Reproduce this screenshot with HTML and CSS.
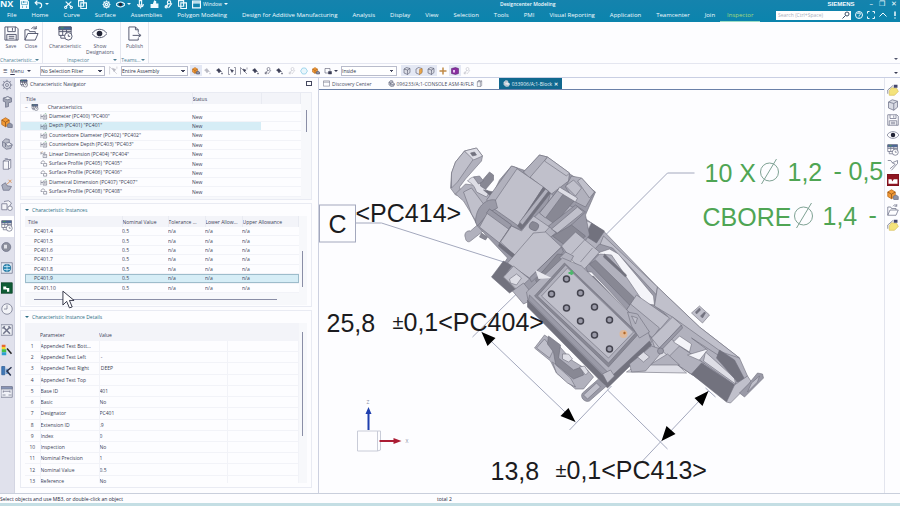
FILE: index.html
```html
<!DOCTYPE html>
<html lang="en">
<head>
    <meta charset="UTF-8">
    <meta name="viewport" content="width=device-width, initial-scale=1.0">
    <title>Designcenter Modeling</title>
    <link rel="stylesheet" href="styles.css">
</head>
<body>
    <!-- icon sprite -->
    <svg class="sprite" aria-hidden="true">
        <symbol id="i-save" viewBox="0 0 16 16"><path d="M1 1h12l2 2v12H1zM4 1v5h8V1M3 15V9h10v6M9 2v3M5 11h6M5 13h6"/></symbol>
        <symbol id="i-folder" viewBox="0 0 16 16"><path d="M1 15V4h4l1 2h6v2M1 15l3-7h11l-3 7zM8 3c2-3 4-2 5 0M13 3V0M13 3h-3"/></symbol>
        <symbol id="i-insp" viewBox="0 0 16 16"><path fill="#fff" d="M1 1h13v9H1z"/><path fill="#42659a" d="M1 1h13v3H1z"/><path d="M1 6h13M5 4v6M9 4v6M3 10v3h5"/><circle cx="11" cy="11" r="4" fill="#fff"/><path d="M11 9v2h2"/><path stroke="#4ba04b" d="M3 2h3"/></symbol>
        <symbol id="i-eye" viewBox="0 0 16 16"><path d="M0 8c4-6 12-6 16 0c-4 6-12 6-16 0z"/><circle cx="8" cy="8" r="3" fill="#222436" stroke="none"/></symbol>
        <symbol id="i-publish" viewBox="0 0 16 16"><path d="M12 7V4L9 1H2v14h10v-2M9 1v3h3M6 10h8M12 8l3 2l-3 2"/></symbol>
        <symbol id="i-undo" viewBox="0 0 16 16"><path d="M6 1L2 5l4 4M2 5h7c6 0 6 8 1 9"/></symbol>
        <symbol id="i-cut" viewBox="0 0 16 16"><path d="M3 3l10 9M13 3L3 12"/><circle cx="3" cy="13" r="2"/><circle cx="13" cy="13" r="2"/></symbol>
        <symbol id="i-copy" viewBox="0 0 16 16"><path d="M1 1h9v10H1zM5 5h10v10H5z"/></symbol>
        <symbol id="i-gear" viewBox="0 0 16 16"><circle cx="8" cy="8" r="5"/><circle cx="8" cy="8" r="2"/><path d="M8 1v2M8 13v2M1 8h2M13 8h2M3 3l2 2M11 11l2 2M13 3l-2 2M5 11l-2 2"/></symbol>
        <symbol id="i-mic" viewBox="0 0 16 16"><path d="M6 1h4v8H6zM3 7c0 7 10 7 10 0M8 12v3"/></symbol>
        <symbol id="i-hand" viewBox="0 0 16 16"><path fill="currentColor" d="M2 8h4l2-6l2 1v4h4v6H2z"/></symbol>
        <symbol id="i-window" viewBox="0 0 16 16"><path d="M1 2h14v12H1zM1 5h14"/></symbol>
        <symbol id="i-part" viewBox="0 0 16 16"><path fill="#b9bcc8" d="M2 5l4-4l5 1v4l4 3l-2 5l-6 1l-5-4z"/><path fill="#e8e9ef" d="M6 7l5-1l4 3l-6 2z"/><path d="M6 7v5M2 5l4 2"/></symbol>
        <symbol id="i-bracket" viewBox="0 0 16 16"><path fill="#9fa3b2" d="M3 3l6-2l5 2v5l-4 1v5l-4 1V8L3 7z"/><path fill="#eceef4" d="M3 3l6-2l5 2l-5 2z"/></symbol>
        <symbol id="i-asm" viewBox="0 0 16 16"><path fill="#f39a35" stroke="#b56618" d="M1 4l5-3l5 3v6l-5 3l-5-3z"/><path stroke="#8a4d15" d="M1 4l5 3l5-3M6 7v6"/><path fill="#8e93a6" d="M8 10l4-2l3 2v4h-6z"/></symbol>
        <symbol id="i-box" viewBox="0 0 16 16"><path fill="#f5f6fa" d="M3 4l4-2h6v11l-3 2H3z"/><path d="M3 4h7v11M10 4l3-2M5 1h4"/></symbol>
        <symbol id="i-edit" viewBox="0 0 16 16"><path fill="#a9adbd" d="M1 8l5-3l2 4l6 1l-3 5H3z"/><path stroke="#d9803a" d="M8 7l6-6M10 1l4 4"/></symbol>
        <symbol id="i-shapes" viewBox="0 0 16 16"><path fill="#f4f4f8" d="M1 5h7v8H1zM4 2l6-1l4 3l-3 5"/><circle cx="12" cy="11" r="3" fill="#fff"/></symbol>
        <symbol id="i-ball" viewBox="0 0 16 16"><circle cx="7" cy="8" r="6" fill="#8c8f9c"/><path fill="#e0e1e8" stroke="none" d="M4 5h4v5H4z"/></symbol>
        <symbol id="i-globe" viewBox="0 0 16 16"><path fill="#e6edf6" d="M0 1h15v14H0z"/><circle cx="8" cy="8" r="5" fill="#2c8bb6" stroke="#226b96"/><path stroke="#cfeaf5" d="M4 6h8M4 10h8M8 3v10"/></symbol>
        <symbol id="i-green" viewBox="0 0 16 16"><path fill="#0f5c35" stroke="#0b4226" d="M0 1h15v14H0z"/><path fill="#fff" stroke="none" d="M3 6h4v2h4v5H8v-3H3z"/></symbol>
        <symbol id="i-clock" viewBox="0 0 16 16"><circle cx="8" cy="8" r="7" fill="#f2f3f7"/><path d="M8 3v5H4"/></symbol>
        <symbol id="i-tools" viewBox="0 0 16 16"><path fill="#eef0f5" d="M0 1h15v14H0z"/><path stroke-width="2" d="M3 4l9 9M12 4l-9 9M2 6l3-3M10 3l3 3"/></symbol>
        <symbol id="i-rainbow" viewBox="0 0 16 16"><g stroke="none"><path fill="#e8662f" d="M1 1h5v3H1z"/><path fill="#f0d929" d="M1 4h5v3H1z"/><path fill="#46c04a" d="M1 7h6v4H1z"/><path fill="#2f9fd0" d="M1 11h6v4H1z"/></g><path stroke="#222" stroke-width="2" d="M8 6l6 7"/></symbol>
        <symbol id="i-cursor" viewBox="0 0 16 16"><path fill="#3f78b8" stroke="#2f5f96" d="M1 2h4v11H1z"/><path fill="#78a4d4" stroke="none" d="M6 5h4v7H6z"/><path stroke="#28324c" stroke-width="2" d="M14 3L8 8l5 6"/></symbol>
        <symbol id="i-measure" viewBox="0 0 16 16"><path fill="#f1f2f8" d="M0 1h15v14H0z"/><path fill="#8d9cc0" d="M0 1h15v3H0z"/><path d="M3 7h9M2 12h4M10 12h4M3 6v3M12 6v3"/></symbol>
        <symbol id="i-dim" viewBox="0 0 16 16"><path d="M1 3v11M1 8h5M6 5h8v9H6zM8 8h4M8 11h4"/><path stroke="#3c9a54" d="M9 3l2-2l3 2"/></symbol>
        <symbol id="i-linear" viewBox="0 0 16 16"><path d="M1 2v6M1 5h9M10 2v4M6 8h8v7H6zM8 11h4"/><path stroke="#d0893c" d="M2 3l3-2"/></symbol>
        <symbol id="i-profile" viewBox="0 0 16 16"><path d="M1 8c0-7 8-8 9-2M1 8h4M7 8h7v6H7z"/></symbol>
        <symbol id="i-ptr" viewBox="0 0 16 16"><path fill="currentColor" d="M1 6l5-3l2 3l3 3h-3l-2 3l-2-3z"/><path d="M10 13h4M12 11v4"/></symbol>
        <symbol id="i-snap" viewBox="0 0 16 16"><path d="M4 1H1v14h3M12 1h3v14h-3"/><path fill="currentColor" d="M5 5l6 2l-3 4z"/></symbol>
        <symbol id="i-corner" viewBox="0 0 16 16"><path d="M1 15V1M1 1l13 13M14 1v4"/><path fill="currentColor" d="M6 4l6 2l-3 4z"/></symbol>
        <symbol id="i-link" viewBox="0 0 16 16"><path d="M2 14l6-8M8 14l6-8"/><circle cx="9" cy="4" r="3"/><circle cx="4" cy="12" r="2"/></symbol>
        <symbol id="i-hex" viewBox="0 0 16 16"><path stroke="#55b5dd" fill="#e9f6fc" d="M5 2h6l4 6l-4 6H5L1 8z"/></symbol>
        <symbol id="i-rect" viewBox="0 0 16 16"><path d="M2 3h10v9H2z"/><path fill="currentColor" d="M9 9h6v5H9z"/></symbol>
        <symbol id="i-cube" viewBox="0 0 16 16"><path fill="#d9dbe4" d="M2 4l5-3l7 2v8l-5 4l-7-3z"/><path d="M2 4l7 2l5-3M9 6v9"/></symbol>
        <symbol id="i-cubeo" viewBox="0 0 16 16"><path fill="#e5e6ee" d="M2 4l5-3l7 2v8l-5 4l-7-3z"/><path fill="#eaa74a" stroke="#b97a28" d="M9 5l5-2v8l-5 4z"/></symbol>
        <symbol id="i-purple" viewBox="0 0 16 16"><path fill="#8a2fa0" stroke="#4b1760" d="M1 3l8-2l6 2v10l-6 2l-8-2z"/><path fill="#e7c6ef" stroke="none" d="M4 6h4v5H4z"/></symbol>
        <symbol id="i-plus" viewBox="0 0 16 16"><path stroke="#c08a48" stroke-width="3" d="M8 1v14M1 8h14"/></symbol>
        <symbol id="i-note" viewBox="0 0 16 16"><path fill="#f4e37c" stroke="#d9c262" d="M3 9l3-4l7 1l2 4l-5 5H3z"/><path fill="#43466e" stroke="none" d="M9 1h5v4H9z"/><path d="M1 13V8l7-6"/></symbol>
        <symbol id="i-pipe" viewBox="0 0 16 16"><path d="M1 2h4l2 3l7-3M14 2v4l-8 9M7 5l4 2l-7 6"/></symbol>
        <symbol id="i-red" viewBox="0 0 16 16"><path fill="#8f1622" stroke="#6a0e18" d="M0 0h16v16H0z"/><path fill="#fff" stroke="none" d="M2 7h4l1 3l2-3h5v6H2z"/></symbol>
    </svg>

    <header class="app-header">
        <div class="title-row">
            <strong class="nx">NX</strong>
            <div class="quick">
                <button aria-label="Save"><svg><use href="#i-save"/></svg></button>
                <button aria-label="Undo"><svg><use href="#i-undo"/></svg><i class="caret"></i></button>
                <button class="push" aria-label="Cut"><svg><use href="#i-cut"/></svg></button>
                <button aria-label="Copy"><svg><use href="#i-copy"/></svg></button>
                <button class="push" aria-label="Settings"><svg><use href="#i-gear"/></svg></button>
                <button aria-label="View"><svg><use href="#i-eye"/></svg><i class="caret"></i></button>
                <button aria-label="Voice"><svg><use href="#i-mic"/></svg></button>
                <button aria-label="Touch"><svg><use href="#i-hand"/></svg></button>
                <button aria-label="Repeat"><svg><use href="#i-link"/></svg></button>
                <button aria-label="Switch"><svg><use href="#i-copy"/></svg></button>
                <button class="win"><svg><use href="#i-window"/></svg>Window<i class="caret"></i></button>
            </div>
            <span class="app-title">Designcenter Modeling</span>
            <strong class="brand">SIEMENS</strong>
            <div class="win-controls">
                <button aria-label="Minimize">&#8211;</button>
                <button aria-label="Restore">&#10064;</button>
                <button aria-label="Close">&#10005;</button>
            </div>
        </div>
        <div class="menu-row">
            <nav class="menu">
                <a href="#">File</a>
                <a href="#">Home</a>
                <a href="#">Curve</a>
                <a href="#">Surface</a>
                <a href="#">Assemblies</a>
                <a href="#">Polygon Modeling</a>
                <a href="#">Design for Additive Manufacturing</a>
                <a href="#">Analysis</a>
                <a href="#">Display</a>
                <a href="#">View</a>
                <a href="#">Selection</a>
                <a href="#">Tools</a>
                <a href="#">PMI</a>
                <a href="#">Visual Reporting</a>
                <a href="#">Application</a>
                <a href="#">Teamcenter</a>
                <a href="#">Join</a>
                <a href="#" class="active">Inspector</a>
            </nav>
            <div class="search">
                <input type="text" placeholder="Search (Ctrl+Space)" aria-label="Search">
                <svg viewBox="0 0 16 16"><circle cx="10" cy="6" r="4"/><path d="M7 9l-6 6"/></svg>
            </div>
            <div class="help">
                <button aria-label="Help"><svg viewBox="0 0 16 16"><circle cx="8" cy="8" r="7"/><path d="M5 6c0-3 6-3 6 0c0 2-3 2-3 4M8 11v2"/></svg></button>
                <button aria-label="Full screen"><svg viewBox="0 0 16 16"><path d="M1 5V1h4M11 1h4v4M15 11v4h-4M5 15H1v-4"/></svg></button>
                <button aria-label="Collapse ribbon"><svg viewBox="0 0 16 16"><path d="M1 11l7-7l7 7"/></svg></button>
                <button aria-label="Alerts"><svg viewBox="0 0 16 16"><path stroke-width="3" d="M8 1v9M8 13v2"/></svg></button>
            </div>
        </div>
    </header>

    <section class="ribbon">
        <div class="group g-char">
            <div class="tools">
                <button class="tool"><svg><use href="#i-save"/></svg>Save</button>
                <button class="tool"><svg><use href="#i-folder"/></svg>Close</button>
            </div>
            <div class="group-name"><span>Characteristic...</span><i class="caret"></i></div>
        </div>
        <div class="group g-insp">
            <div class="tools">
                <button class="tool"><svg><use href="#i-insp"/></svg>Characteristic</button>
                <button class="tool"><svg><use href="#i-eye"/></svg>Show<br>Designators</button>
            </div>
            <div class="group-name"><span>Inspector</span><i class="caret"></i></div>
        </div>
        <div class="group g-team">
            <div class="tools">
                <button class="tool"><svg><use href="#i-publish"/></svg>Publish</button>
            </div>
            <div class="group-name"><span>Teams...</span><i class="caret"></i></div>
        </div>
        <i class="caret ribbon-more"></i>
    </section>

    <section class="select-bar">
        <button class="menu-btn"><span>&#9776;</span><span><u>M</u>enu</span><i class="caret"></i></button>
        <select class="w-filter" aria-label="Selection filter"><option>No Selection Filter</option></select>
        <button class="faded" aria-label="Filter"><svg><use href="#i-corner"/></svg></button>
        <select class="w-scope" aria-label="Selection scope"><option>Entire Assembly</option></select>
        <div class="icons">
            <button class="lit" aria-label="Highlight"><svg><use href="#i-asm"/></svg></button>
            <button class="faded" aria-label="Back"><svg><use href="#i-ptr"/></svg></button>
            <button aria-label="Pick"><svg><use href="#i-ptr"/></svg></button>
            <button aria-label="Bounds"><svg><use href="#i-snap"/></svg></button>
            <button aria-label="Corner"><svg><use href="#i-corner"/></svg></button>
            <button aria-label="Face"><svg><use href="#i-ptr"/></svg></button>
            <button aria-label="Edge"><svg><use href="#i-link"/></svg></button>
            <button aria-label="Curve"><svg><use href="#i-ptr"/></svg></button>
            <button class="faded" aria-label="Chain"><svg><use href="#i-link"/></svg></button>
            <button aria-label="Polygon"><svg><use href="#i-hex"/></svg></button>
            <button aria-label="Find"><svg><use href="#i-asm"/></svg></button>
            <button aria-label="Rectangle"><svg><use href="#i-rect"/></svg></button>
        </div>
        <i class="caret"></i>
        <select class="w-inside" aria-label="Selection mode"><option>Inside</option></select>
        <div class="icons">
            <button class="lit" aria-label="Shaded"><svg><use href="#i-cube"/></svg></button>
            <button class="lit" aria-label="Section"><svg><use href="#i-cubeo"/></svg></button>
            <button class="lit" aria-label="Wireframe"><svg><use href="#i-cube"/></svg></button>
            <button aria-label="Move"><svg><use href="#i-plus"/></svg></button>
            <button class="lit" aria-label="Layer"><svg><use href="#i-purple"/></svg></button>
            <button class="faded" aria-label="Join"><svg><use href="#i-link"/></svg></button>
        </div>
        <i class="caret ribbon-more"></i>
    </section>

    <main class="workspace">
        <nav class="rail" aria-label="Resource bar">
            <button aria-label="Options"><svg><use href="#i-gear"/></svg></button>
            <button aria-label="Assembly"><svg><use href="#i-bracket"/></svg></button>
            <button aria-label="Constraints"><svg><use href="#i-asm"/></svg></button>
            <button aria-label="Part"><svg><use href="#i-part"/></svg></button>
            <button aria-label="Reuse"><svg><use href="#i-box"/></svg></button>
            <button aria-label="Edit"><svg><use href="#i-edit"/></svg></button>
            <button aria-label="Shapes"><svg><use href="#i-shapes"/></svg></button>
            <button class="current" aria-label="Inspector"><svg><use href="#i-insp"/></svg></button>
            <button aria-label="HD3D"><svg><use href="#i-ball"/></svg></button>
            <button aria-label="Web"><svg><use href="#i-globe"/></svg></button>
            <button aria-label="Manufacturing"><svg><use href="#i-green"/></svg></button>
            <button aria-label="History"><svg><use href="#i-clock"/></svg></button>
            <button aria-label="Tools"><svg><use href="#i-tools"/></svg></button>
            <button aria-label="Materials"><svg><use href="#i-rainbow"/></svg></button>
            <button aria-label="Roles"><svg><use href="#i-cursor"/></svg></button>
            <button aria-label="Measure"><svg><use href="#i-measure"/></svg></button>
        </nav>

        <aside class="navigator">
            <h2 class="nav-title"><svg><use href="#i-insp"/></svg>Characteristic Navigator<button aria-label="Maximize"></button></h2>

            <div class="card tree-card">
                <table class="tree">
                    <thead><tr><th class="c-title">Title</th><th class="c-status">Status</th><th></th></tr></thead>
                    <tbody>
                        <tr class="root"><td><i>&#8722;</i><svg><use href="#i-insp"/></svg>Characteristics</td><td></td><td></td></tr>
                        <tr><td><svg><use href="#i-dim"/></svg>Diameter (PC400) "PC400"</td><td>New</td><td></td></tr>
                        <tr class="selected"><td><svg><use href="#i-dim"/></svg>Depth (PC401) "PC401"</td><td>New</td><td></td></tr>
                        <tr><td><svg><use href="#i-dim"/></svg>Counterbore Diameter (PC402) "PC402"</td><td>New</td><td></td></tr>
                        <tr><td><svg><use href="#i-dim"/></svg>Counterbore Depth (PC403) "PC403"</td><td>New</td><td></td></tr>
                        <tr><td><svg><use href="#i-linear"/></svg>Linear Dimension (PC404) "PC404"</td><td>New</td><td></td></tr>
                        <tr><td><svg><use href="#i-profile"/></svg>Surface Profile (PC405) "PC405"</td><td>New</td><td></td></tr>
                        <tr><td><svg><use href="#i-profile"/></svg>Surface Profile (PC406) "PC406"</td><td>New</td><td></td></tr>
                        <tr><td><svg><use href="#i-dim"/></svg>Diametral Dimension (PC407) "PC407"</td><td>New</td><td></td></tr>
                        <tr><td><svg><use href="#i-profile"/></svg>Surface Profile (PC408) "PC408"</td><td>New</td><td></td></tr>
                    </tbody>
                </table>
                <span class="thumb thumb-tree"></span>
            </div>

            <section class="card instances-card">
                <h3><i class="caret"></i>Characteristic Instances</h3>
                <div class="table-wrap instances-wrap">
                    <table class="instances">
                        <thead><tr><th>Title</th><th>Nominal Value</th><th>Tolerance ...</th><th>Lower Allow...</th><th>Upper Allowance</th></tr></thead>
                        <tbody>
                            <tr><td>PC401.4</td><td>0.5</td><td>n/a</td><td>n/a</td><td>n/a</td></tr>
                            <tr><td>PC401.5</td><td>0.5</td><td>n/a</td><td>n/a</td><td>n/a</td></tr>
                            <tr><td>PC401.6</td><td>0.5</td><td>n/a</td><td>n/a</td><td>n/a</td></tr>
                            <tr><td>PC401.7</td><td>0.5</td><td>n/a</td><td>n/a</td><td>n/a</td></tr>
                            <tr><td>PC401.8</td><td>0.5</td><td>n/a</td><td>n/a</td><td>n/a</td></tr>
                            <tr class="selected"><td>PC401.9</td><td>0.5</td><td>n/a</td><td>n/a</td><td>n/a</td></tr>
                            <tr><td>PC401.10</td><td>0.5</td><td>n/a</td><td>n/a</td><td>n/a</td></tr>
                        </tbody>
                    </table>
                    <span class="thumb thumb-inst"></span>
                    <span class="thumb-x"></span>
                </div>
            </section>

            <section class="card details-card">
                <h3><i class="caret"></i>Characteristic Instance Details</h3>
                <div class="table-wrap">
                    <table class="details">
                        <thead><tr><th></th><th>Parameter</th><th>Value</th><th></th></tr></thead>
                        <tbody>
                            <tr><td>1</td><td>Appended Text Bott...</td><td></td><td></td></tr>
                            <tr><td>2</td><td>Appended Text Left</td><td>&nbsp;-</td><td></td></tr>
                            <tr><td>3</td><td>Appended Text Right</td><td>&nbsp;DEEP</td><td></td></tr>
                            <tr><td>4</td><td>Appended Text Top</td><td></td><td></td></tr>
                            <tr><td>5</td><td>Base ID</td><td>401</td><td></td></tr>
                            <tr><td>6</td><td>Basic</td><td>No</td><td></td></tr>
                            <tr><td>7</td><td>Designator</td><td>PC401</td><td></td></tr>
                            <tr><td>8</td><td>Extension ID</td><td>.9</td><td></td></tr>
                            <tr><td>9</td><td>Index</td><td>0</td><td></td></tr>
                            <tr><td>10</td><td>Inspection</td><td>No</td><td></td></tr>
                            <tr><td>11</td><td>Nominal Precision</td><td>1</td><td></td></tr>
                            <tr><td>12</td><td>Nominal Value</td><td>0.5</td><td></td></tr>
                            <tr><td>13</td><td>Reference</td><td>No</td><td></td></tr>
                        </tbody>
                    </table>
                    <span class="thumb thumb-details"></span>
                </div>
            </section>

            <svg class="pointer" viewBox="0 0 14 20"><path d="M1 1v15l4-4l3 7l3-1l-3-7h5z"/></svg>
        </aside>

        <section class="graphics">
            <div class="doc-tabs">
                <button><svg><use href="#i-window"/></svg>Discovery Center</button>
                <button class="tab-console"><svg><use href="#i-part"/></svg>096233/A;1-CONSOLE ASM-R/FLR <svg><use href="#i-box"/></svg></button>
                <button class="open"><svg><use href="#i-part"/></svg>033906/A;1-Block <b>&#10005;</b></button>
            </div>
            <svg class="canvas" viewBox="320 90 564 403" role="img" aria-label="Block model with PMI">
                <!-- leaders and extension lines -->
                <g class="leader">
                    <path d="M356 223h26L520 267M695 173h-27L600 241"/>
                    <path d="M473 337L520 291M570 430L612 386M608 390L668 449M706 388l10 9"/>
                    <path d="M482 332L576 422M709 391L643 461"/>
                </g>

                <g class="model">
                    <!-- hook and neck -->
                    <path class="m4" d="M478 186L490 172L494 175L494 180L483 193z"/>
                    <path class="m2" d="M456 162L465 151L477 148L483 156L482 161L466 179L460 187L463 196L456 195L451 188L452 173z"/>
                    <path class="m1" d="M456 162L465 151L474 159L458 182L452 188L452 173z"/>
                    <path class="m0" d="M465 151L477 148L483 156L474 160z"/>
                    <path class="m5" d="M471 153l4-1l2 3l-4 1z"/>
                    <path class="m2" d="M456 194L466 184L480 186L500 200L494 210L478 226L472 214L464 201z"/>
                    <path class="m1" d="M464 192L472 188L484 204L477 222L472 214z"/>
                    <path class="m0" d="M468 181c7-8 13-3 13 5l9 6l-3 5l-10-5c-2-6-4-8-9-11z"/>
                    <path class="m5" d="M484 190l10 2l4 5l-8-2z"/>
                    <path class="m3" d="M474 177l6-1l4 5l-5 3z"/>
                    <path class="m2" d="M466 238c-2-4 1-8 5-7l8-7l6 6l-14 11c-2 2-5 0-5-3z"/>
                    <path class="m4" d="M482 233l6 4l-2 3l-6-3z"/>

                    <!-- long arm -->
                    <path class="m2" d="M582 216L605 232L658 287L700 327L740 358L748 376L742 384L730 402L692 374L640 340L596 300L570 250z"/>
                    <path class="m1" d="M604 236L658 287L655 304L612 252L600 246z"/>
                    <path class="m3" d="M600 244L613 248L658 296L657 307L668 316L652 338L626 314L590 276L584 262z"/>
                    <path class="mw" d="M598 253L610 249L619 254L654 296L655 305L640 303z"/>
                    <path class="m2" d="M600 254L612 255L641 298L634 303L590 264z"/>
                    <path class="m4" d="M590 264L596 260L636 299L630 305z"/>
                    <path class="m5" d="M605 254L627 275L626 277L604 257z"/>
                    <path class="mw" d="M586 272L592 272L627 309L623 314z"/>
                    <path class="m4" d="M590 277L594 276L622 306L620 309z"/>
                    <path class="m5" d="M592 223L605 231L597 243L586 236z"/>
                    <path class="m0" d="M566 224L578 217L592 223L586 235L574 230z"/>
                    <path class="m1" d="M658 287L700 327L740 358L722 352L673 317L655 306z"/>
                    <path class="m1" d="M637 295L670 318L653 338L625 313z"/>
                    <path class="m2" d="M631 304L660 328L653 338L625 313z"/>
                    <path class="m1" d="M660 330L686 350L705 363L693 375L656 350L652 338z"/>
                    <path class="m2" d="M680 346L705 363L693 375L668 358z"/>
                    <path class="mw" d="M680 336L692 344L690 352L674 342zM688 355L708 349L718 356L704 362z"/>
                    <path class="m2" d="M692 338L720 356L738 380L735 385L700 360L708 350z"/>
                    <path class="m0" d="M706 352L735 378L736 384L704 361z"/>
                    <path class="m5" d="M720 350L735 360L745 379L738 382L717 358z"/>
                    <path class="m1" d="M673 317L682 325L660 348L652 338z"/>
                    <path class="m3" d="M682 325L683 328L662 350L660 348z"/>
                    <path class="m0" d="M627 372L643 362L664 352L687 373z"/>
                    <path class="m2" d="M650 365L668 354L680 365z"/>
                    <path class="m5" d="M702 363L735 385L727 402L692 374z"/>
                    <path class="m1" d="M735 385L748 376L752 382L731 403L727 402z"/>
                    <path class="m3" d="M749 384L758 373L763 374L764 378L745 397L740 393z"/>
                    <path class="m1" d="M752 383L760 376L758 382L748 392z"/>
                    <path class="m1" d="M700 306L710 315L703 323L692 313z"/>
                    <path class="m5" d="M696 312l4-4l1 2l-4 4zM701 316l4-4l1 1l-3 5z"/>

                    <!-- upper housing -->
                    <path class="m3" d="M478 226L500 180L512 166L530 172L540 155L572 175L596 192L586 215L590 235L570 262L535 300L500 270L508 258z"/>
                    <path class="m1" d="M540 155L548 157L570 173L569 181L552 194L524 172z"/>
                    <path class="m2" d="M540 155L548 157L530 178L524 172z"/>
                    <path class="m1" d="M548 157L570 173L567 176L545 161z"/>
                    <path class="m2" d="M572 176L582 178L595 192L586 207L576 202L566 187z"/>
                    <path class="m1" d="M578 181L582 178L595 192L590 198zM566 186L574 180L582 188L576 196z"/>
                    <path class="m1" d="M515 167L544 187L519 226L492 207L488 199L505 178z"/>
                    <path class="m2" d="M512 166L518 168L492 206L487 200z"/>
                    <path class="m5" d="M544 187L551 193L522 230L518 226z"/>
                    <path class="m2" d="M546 189L549 191L523 225L520 222z"/>
                    <path class="m3" d="M476 222c0-14 10-24 20-22l2 8l-8 4l-12 14z"/>
                    <path class="m1" d="M490 209L512 225L500 243L480 227z"/>
                    <path class="m3" d="M490 209L512 225L509 229L487 213z"/>
                    <path class="m2" d="M512 226L522 230L548 204L551 193L556 198L582 212L550 238L518 258L500 243z"/>
                    <path class="m1" d="M512 226L522 231L534 216L550 227L542 236L534 233L517 257L501 242z"/>
                    <path class="m5" d="M500 243L517 256L516 260L499 246z"/>
                    <path class="m4" d="M560 188L577 198L555 224L540 213z"/>
                    <path class="m2" d="M560 188L566 191L546 218L540 213z"/>
                    <path class="m0" d="M560 187L578 198L576 202L558 191z"/>
                    <path class="m3" d="M549 226L576 205L586 212L560 236z"/>
                    <path class="m1" d="M552 229L578 207L584 212L558 233z"/>
                    <rect class="m4" x="530" y="222" width="9" height="8" rx="3" transform="rotate(25 534 226)"/>
                    <path class="m1" d="M534 233L546 232L562 247L530 278L508 263z"/>
                    <path class="m3" d="M562 247L564 252L532 282L530 278z"/>
                    <path class="m5" d="M492 277L504 261L512 266L504 277L516 289L510 293z"/>
                    <path class="m1" d="M504 277L514 266L530 279L518 290z"/>
                    <path class="m0" d="M510 279l7-5l5 4l-5 7l-6-2z"/>
                    <path class="m4" d="M553 236L572 225L586 236L572 250z"/>
                    <path class="m1" d="M562 246L576 232L600 252L584 270L574 262z"/>
                    <path class="m2" d="M572 254l13-14M581 262l12-14"/>
                    <path class="m4" d="M536 280L558 254L566 255L540 288z"/>
                    <path class="m2" d="M560 258l6-6l8 4l-4 8z"/>

                    <!-- connector body -->
                    <path class="m2" d="M513 291L524 283L536 298L524 304z"/>
                    <path class="m2" d="M563 258L527 292L529 303L608 387L652 342L648 330L582 266z"/>
                    <path class="m5" d="M528 300L608 380L650 341L652 345L608 388L528 307z"/>
                    <path class="m3" d="M530 295L608 372L607 378L529 300z"/>
                    <path class="m4" d="M565 263L535 296L609 367L639 334z"/>
                    <path class="m2" d="M566 265L538 296L609 363L636 333z"/>
                    <path class="m1" d="M568 268L542 296L609 358L634 332z"/>
                    <path class="m1" d="M603 374l8-4l4 6l-7 7z"/>
                    <path class="m2" d="M628 312L638 314L650 332L640 338L632 326z"/>
                    <path class="m1" d="M632 316l6 2l-2 6z"/>
                    <path class="m2" d="M630 364L652 346L664 350L646 371L632 372z"/>
                    <path class="m0" d="M638 357l6-5l6 5l-6 5z"/>
                    <circle class="m3" cx="661" cy="351" r="3"/>

                    <!-- clip and locating pin -->
                    <path class="m2" d="M545 335L535 348L551 361L557 373L576 389L584 389L594 377L588 370L572 360L558 344z"/>
                    <path class="m1" d="M545 339L537 348L550 358L554 350z"/>
                    <path class="m4" d="M549 336l12 9l-2 13l15 12l8-3l2 8l-10 4l-18-15l-2-12l-6-8z"/>
                    <path class="m0" d="M563 354l6 0l4 5l-4 3l-6-3zM580 367l5-1l4 6l-3 3z"/>
                    <path class="m1" d="M553 362l18 16l5 9l-8-4l-11-10z"/>
                    <path class="m3" d="M599 379L607 386L590 401C585 403 580 397 583 393z"/>
                    <path class="m1" d="M597 383L601 387L588 399L584 395z"/>
                </g>

                <!-- ten counterbored holes -->
                <g class="holes">
                    <circle cx="567" cy="279" r="3"/><circle cx="552" cy="294" r="3"/>
                    <circle cx="581" cy="293" r="3"/><circle cx="567" cy="308" r="3"/>
                    <circle cx="595" cy="307" r="3"/><circle cx="581" cy="321" r="3"/>
                    <circle cx="610" cy="320" r="3"/><circle cx="595" cy="335" r="3"/>
                    <circle cx="610" cy="349" r="3"/>
                </g>
                <circle class="hot" cx="624" cy="334" r="4"/>
                <circle class="hot-core" cx="625" cy="333" r="1"/>
                <path class="origin" d="M569 273h5M572 270v5"/>
                <path class="white-arrow" d="M536 270l16 8l-13 1z"/>

                <g class="arrows">
                    <path d="M482 332l14 6l-8 8zM576 422l-15-6l8-8zM709 391l-6 15l-8-8zM662 441l5-15l9 8z"/>
                </g>

                <rect class="datum" x="320" y="205" width="36" height="37"/>
                <g class="pmi">
                    <text x="329" y="233">C</text>
                    <text x="356" y="222">&lt;PC414&gt;</text>
                    <text x="327" y="332">25,8</text>
                    <text class="pm" x="393" y="329">±</text>
                    <text x="404" y="331">0,1&lt;PC404&gt;</text>
                    <text x="491" y="480">13,8</text>
                    <text class="pm" x="556" y="477">±</text>
                    <text x="567" y="479">0,1&lt;PC413&gt;</text>
                </g>
                <g class="pmi green">
                    <text x="705" y="182">10 X</text>
                    <text x="788" y="181">1,2</text>
                    <text x="834" y="180">-</text>
                    <text x="849" y="180">0,5</text>
                    <text x="703" y="226">CBORE</text>
                    <text x="823" y="225">1,4</text>
                    <text x="869" y="224">-</text>
                </g>
                <g class="dia">
                    <circle cx="770" cy="172" r="9"/><path d="M762 184L777 159"/>
                    <circle cx="804" cy="216" r="9"/><path d="M797 228L812 203"/>
                </g>

                <!-- view triad -->
                <g class="triad">
                    <path class="cube" d="M358 431h20v20h-20zM378 431h3v19l-3 1"/>
                    <path class="z-axis" d="M368 430V414h-2l3-7l3 7h-2v16z"/>
                    <path class="x-axis" d="M380 440h14v-2l8 3l-8 3v-2h-14z"/>
                    <text x="367" y="404">Z</text>
                    <text x="406" y="443">X</text>
                </g>
            </svg>
        </section>

        <nav class="side-tools" aria-label="Graphics tools">
            <button aria-label="Note"><svg><use href="#i-note"/></svg></button>
            <button aria-label="Solid"><svg><use href="#i-cube"/></svg></button>
            <button aria-label="Save"><svg><use href="#i-save"/></svg></button>
            <button aria-label="Show"><svg><use href="#i-eye"/></svg></button>
            <button aria-label="Characteristic"><svg><use href="#i-insp"/></svg></button>
            <button aria-label="Route"><svg><use href="#i-pipe"/></svg></button>
            <button aria-label="NX"><svg><use href="#i-red"/></svg></button>
            <button aria-label="Component"><svg><use href="#i-asm"/></svg></button>
            <button aria-label="Open"><svg><use href="#i-folder"/></svg></button>
            <button aria-label="New note"><svg><use href="#i-note"/></svg></button>
        </nav>
    </main>

    <footer class="status">
        <span class="hint">Select objects and use MB3, or double-click an object</span>
        <span>total 2</span>
    </footer>
</body>
</html>
```

FILE: styles.css
```css
* {
    box-sizing: border-box;
}

body {
    margin: 0;
    height: 100vh;
    display: flex;
    flex-direction: column;
    overflow: hidden;
    font-family: "Open Sans", "Noto Sans", sans-serif;
    font-size: 5px;
    line-height: 8px;
    color: #3a3d55;
    background: #fdfdff;
}

button {
    margin: 0;
    padding: 0;
    border: none;
    background: none;
    font: inherit;
    color: inherit;
    display: flex;
    align-items: center;
    justify-content: center;
}

svg {
    width: 9px;
    height: 9px;
    flex: none;
    fill: none;
    stroke: currentColor;
    overflow: hidden;
}

.sprite {
    display: none;
}

.caret {
    display: inline-block;
    flex: none;
    border: 2px solid transparent;
    border-top-color: currentColor;
    border-bottom: none;
}

/* header */
.app-header {
    flex: none;
    height: 22px;
    color: #f2fbff;
    background: linear-gradient(#1583ad, #0b84ad);
}

.title-row {
    display: flex;
    align-items: center;
    height: 8px;
}

.nx {
    width: 20px;
    font-size: 9px;
}

.quick {
    display: flex;
    align-items: center;
    gap: 5px;
    width: 480px;
}

.quick svg {
    stroke-width: 2;
}

.quick button {
    gap: 2px;
}

.quick .push {
    margin-left: 10px;
}

.app-title {
    flex: 1;
    font-weight: 600;
}

.brand {
    font-family: "Liberation Sans", sans-serif;
    font-size: 6px;
    width: 42px;
}

.win-controls {
    display: flex;
    gap: 6px;
    padding-right: 3px;
    font-size: 7px;
}

.menu-row {
    display: flex;
    align-items: center;
    height: 14px;
}

.menu {
    flex: 1;
    display: flex;
    align-items: stretch;
    gap: 15px;
    padding-left: 7px;
    font-size: 6px;
    line-height: 15px;
    white-space: nowrap;
}

.menu a {
    color: inherit;
    text-decoration: none;
}

.menu .active {
    margin: 0 -7px 0 -10px;
    padding: 0 7px;
    height: 14px;
    color: #a5db7a;
    border-bottom: 1px solid #9bdcc4;
}

.search {
    display: flex;
    align-items: center;
    width: 75px;
    height: 9px;
    padding: 0 1px 0 2px;
    background: #fff;
    color: #3c5068;
}

.search input {
    flex: 1;
    min-width: 0;
    padding: 0;
    border: none;
    background: none;
    font: inherit;
}

.search input::placeholder {
    color: #a9b0bd;
}

.search svg {
    width: 8px;
    height: 8px;
    stroke-width: 2;
}

.help {
    display: flex;
    gap: 4px;
    padding: 0 1px 0 4px;
}

.help svg {
    width: 8px;
    height: 8px;
    stroke-width: 2;
}

/* ribbon */
.ribbon {
    flex: none;
    display: flex;
    height: 42px;
    border-bottom: 1px solid #e4e6f0;
    color: #50546c;
}

.group {
    display: flex;
    flex-direction: column;
    padding: 4px 0 0;
    border-right: 1px solid #e4e6ee;
}

.g-char {
    width: 43px;
}

.g-insp {
    width: 78px;
}

.g-team {
    width: 28px;
}

.tools {
    flex: 1;
    display: flex;
    align-items: flex-start;
    justify-content: center;
    gap: 5px;
}

.tool {
    flex-direction: column;
    line-height: 6px;
    text-align: center;
}

.tool svg {
    width: 15px;
    height: 15px;
    margin-bottom: 2px;
}

.group-name {
    display: flex;
    align-items: center;
    height: 7px;
    padding-right: 3px;
    color: #4d7f94;
    white-space: nowrap;
}

.group-name span {
    flex: 1;
    min-width: 0;
    text-align: center;
}

.ribbon-more {
    margin: auto 2px 3px auto;
}

/* selection bar */
.select-bar {
    flex: none;
    display: flex;
    align-items: center;
    height: 14px;
    border-bottom: 1px solid #c9cfe3;
}

.menu-btn {
    width: 40px;
    gap: 3px;
    padding-right: 6px;
}

.select-bar select {
    height: 10px;
    padding: 0;
    border: 1px solid #b9bccb;
    font: inherit;
    color: #2c2f44;
    appearance: none;
    background-color: #fff;
    background-image: linear-gradient(45deg, transparent 50%, #45485f 50%), linear-gradient(-45deg, transparent 50%, #45485f 50%);
    background-size: 2px 2px;
    background-position: right 4px center, right 2px center;
    background-repeat: no-repeat;
}

.w-filter {
    width: 65px;
}

.w-scope {
    width: 67px;
}

.select-bar .w-inside {
    width: 56px;
    margin: 0 2px 0 3px;
}

.select-bar > button.faded {
    width: 16px;
}

.faded {
    opacity: 0.35;
}

.icons {
    display: flex;
    padding-left: 2px;
}

.icons button {
    width: 12px;
    height: 11px;
}

.icons svg {
    width: 8px;
    height: 8px;
}

.icons .lit {
    background: #e4e8f4;
}

/* workspace */
.workspace {
    flex: 1;
    min-height: 0;
    display: grid;
    grid-template-columns: 15px 304px 1fr 16px;
}

.rail {
    background: #e0e1ec;
    display: grid;
    grid-template-rows: 14px repeat(15, 1fr);
    height: 100%;
    padding-bottom: 91px;
    border-right: 1px solid #d3d5e2;
    color: #6f7389;
}

.rail svg {
    width: 12px;
    height: 12px;
}

.rail .current {
    background: #fff;
}

.navigator {
    position: relative;
    display: flex;
    flex-direction: column;
    padding: 0 6px 5px 5px;
    border-right: 1px solid #cdd1e0;
    min-height: 0;
}

.nav-title {
    display: flex;
    align-items: center;
    gap: 2px;
    flex: none;
    height: 11px;
    margin: 0;
    font-size: 5px;
    font-weight: 400;
}

.nav-title svg {
    width: 8px;
}

.nav-title button {
    width: 6px;
    height: 5px;
    margin-left: auto;
    border: 1px solid #45485f;
}

.card {
    position: relative;
    flex: none;
    margin-bottom: 3px;
    padding: 0 4px 4px;
    border: 1px solid #e9ebf3;
}

.card h3 {
    display: flex;
    align-items: center;
    gap: 3px;
    height: 12px;
    margin: 0;
    font-size: 5px;
    font-weight: 400;
    color: #2c6e84;
}

.table-wrap {
    position: relative;
    background: #f7f8fb;
}

table {
    width: 100%;
    border-collapse: collapse;
    table-layout: fixed;
    white-space: nowrap;
}

th,
td {
    padding: 0;
    text-align: left;
    font-weight: 400;
    line-height: 8px;
    overflow: hidden;
}

th {
    background: #f3f4f9;
    border-right: 1px solid #e9ebf2;
}

td {
    background: #fdfdff;
    border-bottom: 1px solid #f2f3f8;
}

.selected td {
    background: #d6edf6;
}

.thumb {
    position: absolute;
    right: 4px;
    width: 1px;
    background: #8a8ea6;
}

.tree-card {
    margin-top: 3px;
    padding: 0 10px 2px 0;
    background: #f7f8fb;
}

.tree {
    height: 104px;
}

.tree thead tr {
    height: 11px;
}

.tree th:first-child {
    padding-left: 5px;
}

.tree .c-title {
    width: 171px;
}

.tree .c-status {
    width: 69px;
}

.tree td:first-child {
    line-height: 7px;
    padding-left: 19px;
}

.tree .root td:first-child {
    padding-left: 4px;
}

.tree .root i {
    margin-right: 3px;
    font-style: normal;
}

.tree .root svg {
    margin-right: 9px;
}

.tree td svg {
    width: 8px;
    height: 7px;
    vertical-align: middle;
    margin-right: 1px;
}

.tree .selected td:last-child {
    background: #fdfdff;
}

.thumb-tree {
    top: 17px;
    height: 22px;
}

.instances-card {
    padding-bottom: 1px;
}

.instances-wrap {
    padding-bottom: 12px;
}

.instances {
    height: 77px;
    width: 274px;
}

.instances thead tr {
    height: 11px;
}

.instances th:nth-child(1) {
    width: 97px;
    padding-left: 3px;
}

.instances th:nth-child(2) {
    width: 46px;
}

.instances th:nth-child(3),
.instances th:nth-child(4) {
    width: 37px;
}

.instances td:first-child {
    padding-left: 9px;
}

.instances .selected {
    outline: 1px solid #9dbccb;
    outline-offset: -1px;
}

.thumb-inst {
    top: 35px;
    height: 36px;
}

.thumb-x {
    position: absolute;
    left: 9px;
    right: 30px;
    bottom: 5px;
    height: 1px;
    background: #8a8ea6;
}

.details-card {
    flex: 1;
    min-height: 0;
    display: flex;
    flex-direction: column;
    margin-bottom: 0;
}

.details-card h3 {
    flex: none;
}

.details-card .table-wrap {
    flex: 1;
    min-height: 0;
    overflow: hidden;
}

.details {
    width: 274px;
    height: 164px;
}

.details thead tr {
    height: 18px;
}

.details th {
    padding-top: 5px;
    border-right: none;
}

.details th:nth-child(1) {
    width: 15px;
}

.details th:nth-child(2) {
    width: 59px;
}

.details th:nth-child(3) {
    width: 128px;
}

.details td:first-child {
    text-align: center;
}

.details td {
    border-right: 1px solid #f2f3f8;
}

.thumb-details {
    top: 9px;
    height: 104px;
}

.pointer {
    position: absolute;
    left: 47px;
    top: 212px;
    width: 13px;
    height: 19px;
}

.pointer path {
    fill: #fff;
    stroke: #2c2e40;
}

/* graphics window */
.graphics {
    display: flex;
    flex-direction: column;
    min-width: 0;
    min-height: 0;
}

.doc-tabs {
    flex: none;
    display: flex;
    height: 12px;
    border-bottom: 1px solid #6a80a8;
    color: #4a4d63;
    white-space: nowrap;
}

.doc-tabs button {
    gap: 2px;
    padding: 0 4px;
}

.doc-tabs svg {
    width: 7px;
    height: 7px;
}

.doc-tabs .tab-console {
    margin-left: 8px;
    padding-right: 16px;
}

.doc-tabs .open {
    color: #e7f5fb;
    background: #10688f;
}

.canvas {
    flex: 1;
    width: 100%;
    min-height: 0;
    height: auto;
}

.leader path {
    stroke: #a3a8bd;
}

.model path,
.model rect,
.model circle {
    stroke: #6e6e7c;
    stroke-width: 0.6;
    stroke-linejoin: round;
}

.m0 { fill: #dedee6; }
.m1 { fill: #c0c0cb; }
.m2 { fill: #b1b1bd; }
.m3 { fill: #9a9aa7; }
.m4 { fill: #888894; }
.m5 { fill: #72727e; }
.mw { fill: #f4f4f9; }

.holes circle {
    fill: #9a9aa8;
    stroke: #44444f;
    stroke-width: 1.5;
}

.hot {
    fill: #dfb898;
    stroke: none;
}

.hot-core {
    fill: #5a3418;
    stroke: #d98a45;
}

.origin {
    stroke: #4cb86a;
    stroke-width: 2;
}

.white-arrow {
    fill: #e9e9ef;
    stroke: none;
}

.arrows path {
    fill: #000;
    stroke: none;
}

.datum {
    stroke: #a3a8bd;
}

.pmi text {
    fill: #1b1b20;
    stroke: none;
    font-family: "Liberation Sans", Arial, sans-serif;
    font-size: 25px;
}

.pmi .pm {
    font-size: 20px;
}

.green text {
    fill: #4fa554;
}

.dia {
    stroke: #7fa294;
}

.cube {
    stroke: #c9ccd8;
}

.z-axis {
    fill: #1f3fae;
    stroke: none;
}

.x-axis {
    fill: #ab1c34;
    stroke: none;
}

.triad text {
    fill: #8b90a8;
    stroke: none;
    font-size: 5px;
}

.side-tools {
    display: grid;
    grid-auto-rows: 15px;
    align-content: start;
    padding-top: 4px;
    border-left: 1px solid #e3e5ee;
    color: #6f7389;
}

.side-tools svg {
    width: 12px;
    height: 12px;
}

/* status line */
.status {
    flex: none;
    display: flex;
    align-items: center;
    height: 13px;
    border-top: 1px solid #c9cfdc;
    border-bottom: 3px solid #c4dee4;
    color: #23263a;
}

.hint {
    width: 437px;
}
```
